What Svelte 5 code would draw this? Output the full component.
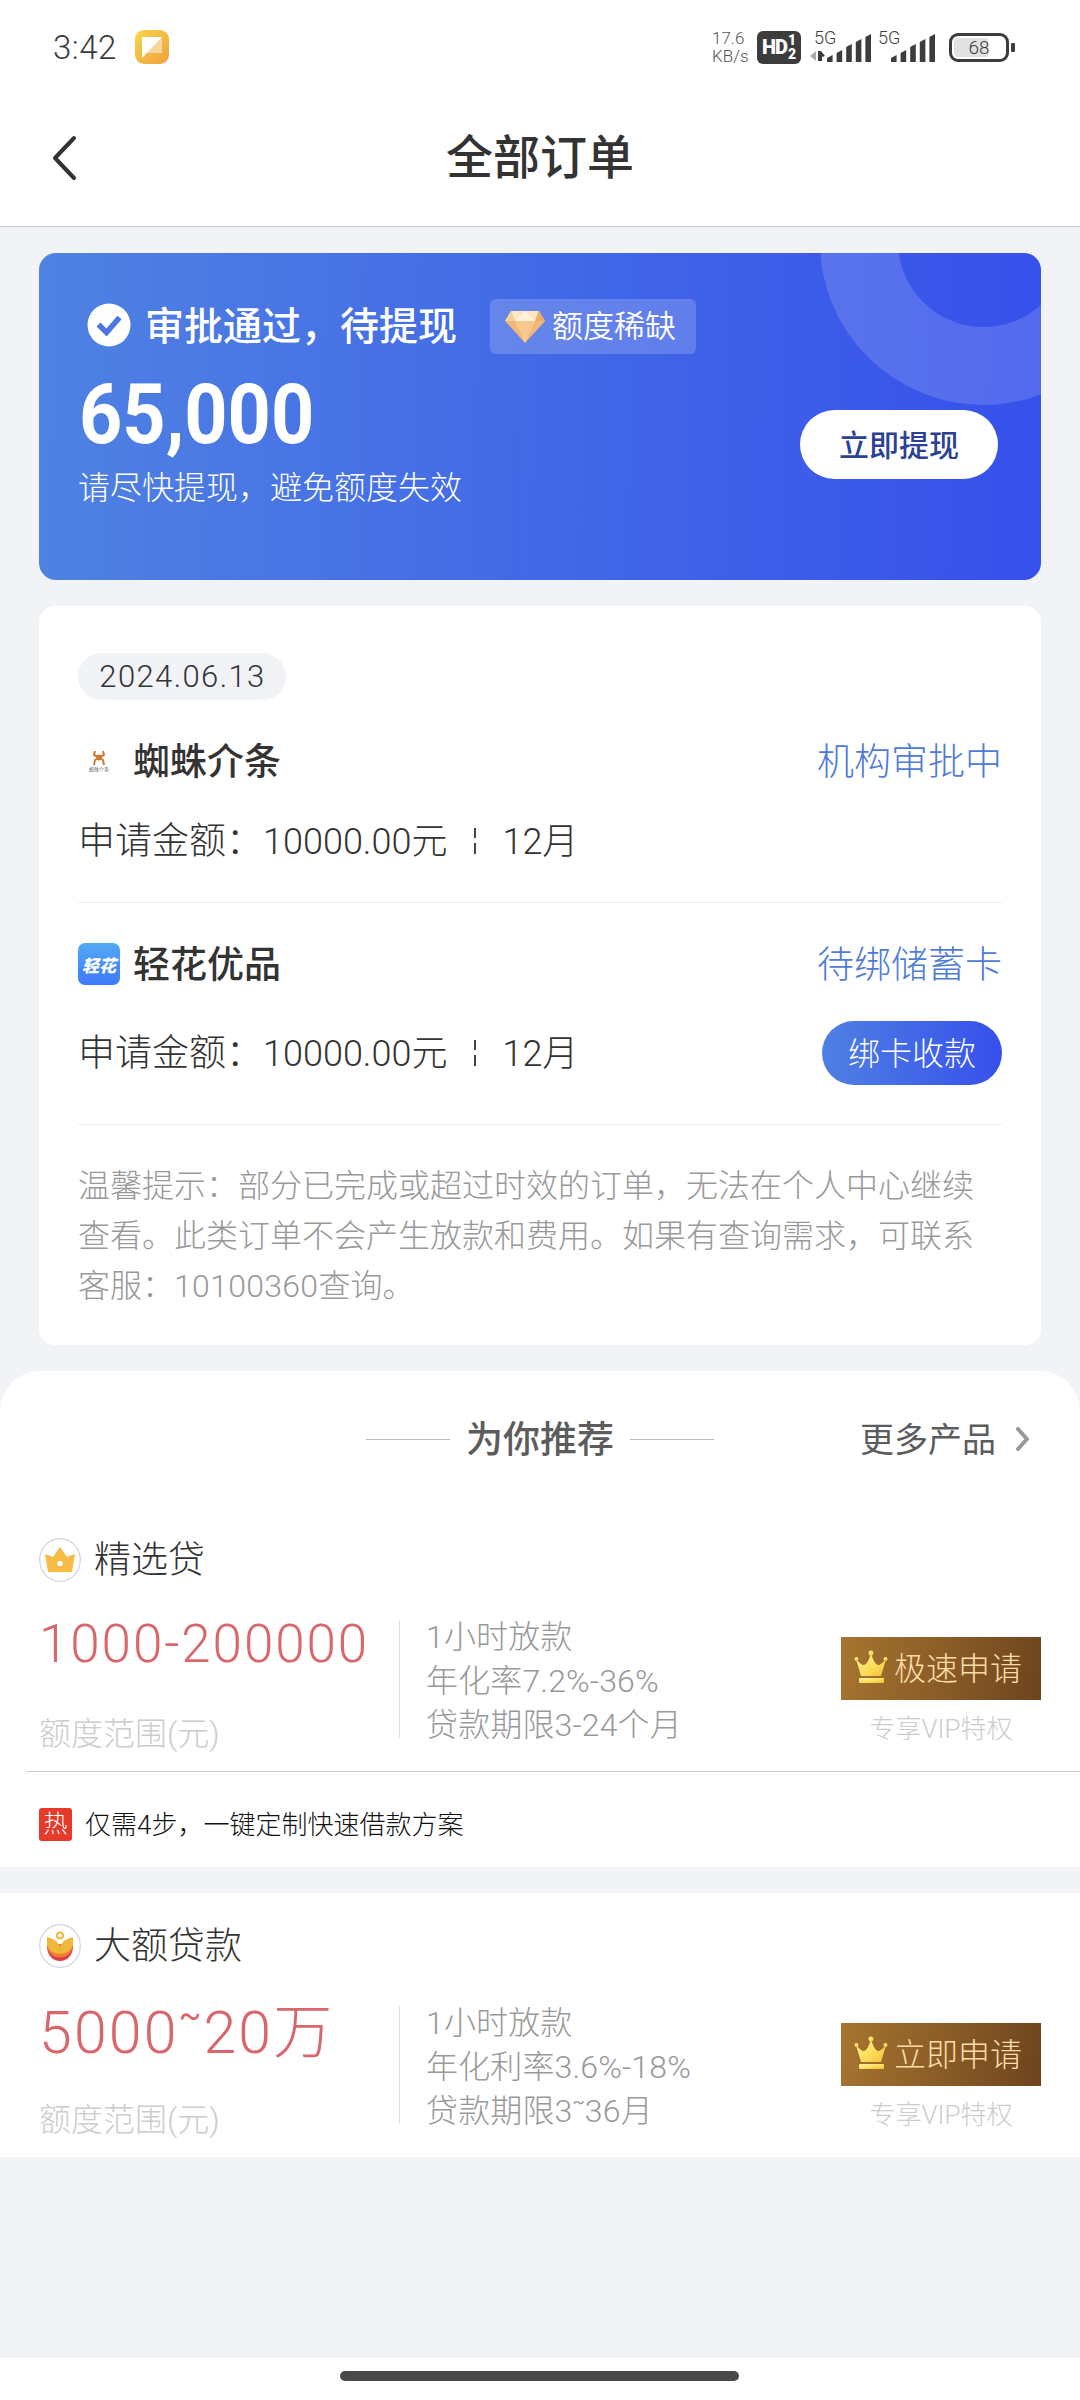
<script>
  const orders = [
    {
      name: '蜘蛛介条',
      logo: 'spider',
      status: '机构审批中',
      amount: '10000.00元',
      term: '12月',
      action: ''
    },
    {
      name: '轻花优品',
      logo: 'flower',
      status: '待绑储蓄卡',
      amount: '10000.00元',
      term: '12月',
      action: '绑卡收款'
    }
  ];

  const products = [
    {
      name: '精选贷',
      icon: 'crown',
      range: '1000-200000',
      wide: false,
      details: ['1小时放款', '年化率7.2%-36%', '贷款期限3-24个月'],
      button: '极速申请',
      hot: '仅需4步，一键定制快速借款方案'
    },
    {
      name: '大额贷款',
      icon: 'lotus',
      range: '5000~20万',
      wide: true,
      details: ['1小时放款', '年化利率3.6%-18%', '贷款期限3~36月'],
      button: '立即申请',
      hot: ''
    }
  ];

  const bars = [7, 12, 18, 23, 28];
</script>

<!-- the tilde in a range is small and raised -->
{#snippet ranged(text)}
  {#each text.split('~') as part, i}{#if i}<sup>~</sup>{/if}{part}{/each}
{/snippet}

<div class="page">
  <div class="statusbar">
    <span class="clock">3:42</span>
    <svg class="app-icon" width="34" height="34" viewBox="0 0 34 34">
      <defs>
        <linearGradient id="appbg" x1="0" y1="0" x2="1" y2="1">
          <stop offset="0" stop-color="#f6d64a" />
          <stop offset="1" stop-color="#f0a03e" />
        </linearGradient>
      </defs>
      <rect width="34" height="34" rx="9" fill="url(#appbg)" />
      <path d="M7 7h20v16H12L7 28z" fill="#f8d79a" />
      <path d="M7 7h20L7 28z" fill="#fff" />
    </svg>
    <div class="speed">
      <span>17.6</span>
      <span>KB/s</span>
    </div>
    <div class="hd">
      <b>HD</b>
      <span><i>1</i><i>2</i></span>
    </div>
    <div class="signal first">
      <span class="net">5G</span>
      <svg width="61" height="30" viewBox="0 0 61 30">
        <path d="M6 19v10L0 24z" fill="#aaa" />
        <path d="M8 19h3l4 5-3 1v4H8z" fill="#3c3c3c" />
        {#each bars as h, i}
          <path d="M{17 + i * 9.6} {30 - h + 3}l5.6 -3V30h-5.6z" fill="#3c3c3c" />
        {/each}
      </svg>
    </div>
    <div class="signal">
      <span class="net">5G</span>
      <svg width="61" height="30" viewBox="0 0 61 30">
        {#each bars as h, i}
          <path d="M{17 + i * 9.6} {30 - h + 3}l5.6 -3V30h-5.6z" fill="#3c3c3c" />
        {/each}
      </svg>
    </div>
    <div class="battery"><span>68</span></div>
    <div class="battery-tip"></div>
  </div>

  <header>
    <svg class="back" width="26" height="46" viewBox="0 0 26 46">
      <path d="M22 3L3 23L22 43" fill="none" stroke="#333" stroke-width="4" stroke-linecap="round" stroke-linejoin="round" />
    </svg>
    <h1>全部订单</h1>
  </header>

  <section class="banner">
    <div class="ring"></div>
    <div class="banner-main">
      <div class="banner-title">
        <svg class="check" width="44" height="44" viewBox="0 0 44 44">
          <circle cx="22" cy="22" r="21.5" fill="#fff" />
          <path d="M11.500 21.500l8 8L32.500 14.500" fill="none" stroke="#4a75e2" stroke-width="5.500" />
        </svg>
        <strong>审批通过，待提现</strong>
        <div class="scarce">
          <svg width="42" height="34" viewBox="0 0 42 34">
            <path d="M7 1h28l6 10L21 33L1 11z" fill="#f3b878" />
            <path d="M7 1h28l-4 10H11z" fill="#fde6c3" />
            <path d="M7 1L1 11h10z" fill="#f8cf9c" />
            <path d="M35 1l6 10H31z" fill="#efaa66" />
            <path d="M11 11h20L21 33z" fill="#f8c98e" />
            <path d="M11 11L21 1L31 11z" fill="#fff1da" />
          </svg>
          <span>额度稀缺</span>
        </div>
      </div>
      <div class="amount">65,000</div>
      <p>请尽快提现，避免额度失效</p>
    </div>
    <button class="withdraw">立即提现</button>
  </section>

  <section class="card">
    <span class="date">2024.06.13</span>
    {#each orders as order}
      <div class="order" class:has-action={order.action}>
        <div class="order-head">
          {#if order.logo === 'spider'}
            <div class="logo spider">
              <svg width="14" height="16" viewBox="0 0 14 16">
                <path d="M3 1L2 5l4 2M11 1l1 4l-4 2M2 15l1-5l3-2M12 15l-1-5l-3-2" fill="none" stroke="#cf7a35" stroke-width="2" />
                <circle cx="7" cy="7.500" r="3" fill="#cf7a35" />
              </svg>
              <span>蜘蛛介条</span>
            </div>
          {:else}
            <div class="logo flower"><span>轻花</span></div>
          {/if}
          <strong>{order.name}</strong>
          <span class="status">{order.status}</span>
        </div>
        <div class="order-body">
          <span class="label">申请金额：</span>
          <span class="value">{order.amount}</span>
          <svg class="sep" width="4" height="26" viewBox="0 0 4 26">
            <path d="M2 0v10M2 15v11" stroke="#444" stroke-width="2" />
          </svg>
          <span class="value">{order.term}</span>
          {#if order.action}
            <button class="bind">{order.action}</button>
          {/if}
        </div>
      </div>
    {/each}
    <p class="tips">
      温馨提示：部分已完成或超过时效的订单，无法在个人中心继续<br />
      查看。此类订单不会产生放款和费用。如果有查询需求，可联系<br />
      客服：<span>10100360</span>查询。
    </p>
  </section>

  <section class="recommend">
    <div class="rec-head">
      <div class="rec-title"><i></i><strong>为你推荐</strong><i></i></div>
      <div class="more">
        <span>更多产品</span>
        <svg width="14" height="24" viewBox="0 0 14 24">
          <path d="M2 2l9 10l-9 10" fill="none" stroke="#999" stroke-width="4" stroke-linejoin="round" stroke-linecap="round" />
        </svg>
      </div>
    </div>

    {#each products as item}
      <article>
        <div class="item-name">
          <svg width="42" height="44" viewBox="0 0 42 44">
            <ellipse cx="21" cy="22" rx="20.300" ry="21.300" fill="#fff" stroke="#d3d3e4" stroke-width="1.200" />
            {#if item.icon === 'crown'}
              <path d="M6 16l8 3l7-10l7 10l8-3l-3 18H9z" fill="#f7bb45" />
              <rect x="18.500" y="23" width="5" height="5" rx="1" fill="#fff" />
            {:else}
              <path d="M8 22c0 20 26 20 26 0z" fill="#dd3a44" />
              <path d="M8 20c0 18 26 18 26 0z" fill="#ee7e35" />
              <path d="M8 13q10 2 13 10q3-8 13-10v7c-2 13-24 13-26 0z" fill="#f0b83a" />
              <circle cx="21" cy="11.500" r="3" fill="none" stroke="#edb93b" stroke-width="2" />
            {/if}
          </svg>
          <h2>{item.name}</h2>
        </div>
        <div class="item-row">
          <div class="range" class:wide={item.wide}>
            <b>{@render ranged(item.range)}</b>
            <span>额度范围(元)</span>
          </div>
          <ul>
            {#each item.details as line}
              <li>{@render ranged(line)}</li>
            {/each}
          </ul>
          <div class="apply">
            <button>
              <svg width="34" height="34" viewBox="0 0 34 34">
                <defs>
                  <linearGradient id="gold-{item.icon}" x1="0" y1="0" x2="1" y2="1">
                    <stop offset="0" stop-color="#fff3a0" />
                    <stop offset="0.600" stop-color="#fbdc55" />
                    <stop offset="1" stop-color="#f3bb3c" />
                  </linearGradient>
                </defs>
                <g fill="url(#gold-{item.icon})">
                  <path d="M2 9q5 6 8 6q4-1 7-12q3 11 7 12q3 0 8-6l-5 17H7z" />
                  <rect x="5" y="28" width="25" height="5" rx="1" />
                  <circle cx="17" cy="3" r="2.500" />
                  <circle cx="2.500" cy="9" r="2" />
                  <circle cx="31.500" cy="9" r="2" />
                </g>
              </svg>
              <span>{item.button}</span>
            </button>
            <p>专享VIP特权</p>
          </div>
        </div>
        {#if item.hot}
          <div class="hot"><i>热</i><span>{item.hot}</span></div>
        {/if}
      </article>
    {/each}
  </section>

  <div class="navbar"><div></div></div>
</div>

<style>
  .page {
    display: flex;
    flex-direction: column;
    width: 1080px;
    height: 2400px;
    overflow: hidden;
    background: #f2f3f7;
    color: #333;
    font-family: Roboto, 'Noto Sans CJK SC', sans-serif;
    font-weight: 300;
  }
  .page * {
    box-sizing: border-box;
    white-space: nowrap;
  }
  h1, h2, p, ul {
    margin: 0;
    padding: 0;
    list-style: none;
    font-weight: 300;
  }
  i {
    font-style: normal;
  }
  sup {
    font-size: 0.56em;
    font-weight: 400;
    line-height: 0;
    vertical-align: 0.78em;
  }
  svg {
    display: block;
    flex: none;
  }
  button {
    border: 0;
    font: inherit;
  }

  .statusbar {
    display: flex;
    align-items: center;
    height: 94px;
    padding: 0 65px 0 53px;
    background: #fff;
    color: #3c3c3c;
  }
  .clock {
    width: 82px;
    font-size: 33px;
    letter-spacing: 0.5px;
  }
  .speed {
    display: flex;
    flex-direction: column;
    width: 45px;
    margin-left: auto;
    color: #555;
    font-size: 17px;
    line-height: 18px;
  }
  .hd {
    display: flex;
    align-items: center;
    justify-content: center;
    gap: 1px;
    width: 44px;
    height: 33px;
    border-radius: 6px;
    background: #3c3c3c;
    color: #fff;
  }
  .hd b {
    font-size: 20px;
    font-weight: 900;
    letter-spacing: -1px;
  }
  .hd i {
    display: block;
    font-size: 14px;
    font-weight: 900;
    line-height: 14px;
  }
  .signal {
    position: relative;
    width: 61px;
    height: 30px;
    margin-left: 3px;
  }
  .signal.first {
    margin-left: 9px;
  }
  .net {
    position: absolute;
    top: -5px;
    left: 4px;
    font-size: 18px;
  }
  .battery {
    width: 60px;
    height: 29px;
    margin-left: 14px;
    border: 3px solid #3c3c3c;
    border-radius: 9px;
    background: linear-gradient(90deg, #e2e2e2 66%, #fff 66%);
    background-clip: content-box;
    padding: 2px;
    text-align: center;
    font-size: 19px;
    line-height: 20px;
  }
  .battery-tip {
    width: 4px;
    height: 9px;
    margin-left: 2px;
    border-radius: 1px;
    background: #3c3c3c;
  }

  header {
    position: relative;
    display: flex;
    align-items: center;
    justify-content: center;
    height: 133px;
    padding-bottom: 14px;
    border-bottom: 1px solid #c6c8cb;
    background: #fff;
  }
  .back {
    position: absolute;
    left: 52px;
    top: 41px;
  }
  h1 {
    font-size: 47px;
    font-weight: 500;
  }

  .banner {
    position: relative;
    display: flex;
    justify-content: space-between;
    height: 327px;
    margin: 26px 39px 0;
    padding: 46px 43px 0 40px;
    border-radius: 17px;
    overflow: hidden;
    background: linear-gradient(91deg, #4f82e2, #3650eb);
    color: #fff;
  }
  .ring {
    position: absolute;
    left: 781px;
    top: -175px;
    width: 327px;
    height: 327px;
    border: 78px solid rgba(255, 255, 255, 0.15);
    border-radius: 50%;
  }
  .banner-title {
    display: flex;
    align-items: center;
    height: 55px;
    padding-left: 8px;
  }
  .check {
    margin-bottom: 4px;
  }
  .banner-title strong {
    margin-left: 14px;
    padding-bottom: 8px;
    font-size: 39px;
    font-weight: 500;
  }
  .scarce {
    display: flex;
    align-items: center;
    gap: 6px;
    width: 206px;
    height: 55px;
    margin-left: 33px;
    padding-left: 14px;
    border-radius: 6px;
    background: rgba(255, 255, 255, 0.18);
    font-size: 31px;
    font-weight: 350;
  }
  .scarce span {
    padding-bottom: 6px;
  }
  .amount {
    margin-top: 16px;
    transform: scaleX(0.91);
    transform-origin: left;
    font-size: 83px;
    font-weight: 700;
    line-height: 90px;
  }
  .banner p {
    margin: 6px 0 0 -1px;
    font-size: 32px;
    line-height: 44px;
  }
  .withdraw {
    width: 198px;
    height: 69px;
    margin-top: 111px;
    padding-bottom: 5px;
    border-radius: 35px;
    background: #fff;
    color: #2b4192;
    font-size: 30px;
    font-weight: 500;
  }

  .card {
    height: 739px;
    margin: 26px 39px 0;
    padding: 47px 39px 0;
    border-radius: 16px;
    background: #fff;
  }
  .date {
    display: block;
    width: 208px;
    height: 47px;
    padding-left: 1px;
    border-radius: 24px;
    background: #f2f3f7;
    text-align: center;
    font-size: 31px;
    line-height: 47px;
    letter-spacing: 1.4px;
  }
  .order {
    height: 203px;
    padding-top: 37px;
    border-bottom: 1px solid #efefef;
  }
  .order.has-action {
    height: 222px;
  }
  .order-head {
    display: flex;
    align-items: center;
    height: 48px;
  }
  .order-head strong {
    margin-left: 13px;
    padding-bottom: 5px;
    font-size: 37px;
    font-weight: 500;
  }
  .status {
    margin-left: auto;
    padding-bottom: 5px;
    color: #4e7bd8;
    font-size: 37px;
  }
  .logo {
    display: flex;
    flex-direction: column;
    align-items: center;
    justify-content: center;
    width: 42px;
    height: 42px;
    border-radius: 7px;
  }
  .spider span {
    height: 6px;
    font-size: 5px;
    line-height: 6px;
  }
  .flower {
    background: linear-gradient(#53aaf3, #3d78fb);
    color: #fff;
  }
  .flower span {
    font-size: 17px;
    font-weight: 900;
    font-style: italic;
  }
  .order-body {
    display: flex;
    align-items: center;
    height: 64px;
    margin-top: 24px;
    font-size: 37px;
  }
  .has-action .order-body {
    margin-top: 33px;
  }
  .label,
  .value {
    padding-bottom: 6px;
  }
  .value {
    font-size: 36px;
  }
  .sep {
    margin: 0 25px 0 26px;
  }
  .bind {
    width: 180px;
    height: 64px;
    margin-left: auto;
    padding-bottom: 5px;
    border-radius: 32px;
    background: linear-gradient(90deg, #4f80e3, #3650eb);
    color: #fff;
    font-size: 32px;
  }
  .tips {
    margin-top: 36px;
    color: #999;
    font-size: 32px;
    line-height: 50px;
  }
  .tips span {
    letter-spacing: 0.3px;
  }

  .recommend {
    height: 785px;
    margin-top: 26px;
  }
  .rec-head {
    position: relative;
    display: flex;
    align-items: center;
    justify-content: center;
    height: 136px;
    border-radius: 40px 40px 0 0;
    background: #fff;
    color: #5c5c5c;
  }
  .rec-title {
    display: flex;
    align-items: center;
    gap: 16px;
    font-size: 37px;
  }
  .rec-title strong {
    padding-bottom: 5px;
    font-weight: 500;
  }
  .rec-title i {
    width: 84px;
    height: 1px;
    background: #bbb;
  }
  .more {
    position: absolute;
    right: 50px;
    display: flex;
    align-items: center;
    gap: 20px;
    font-size: 34px;
    font-weight: 400;
  }
  .more span {
    padding-bottom: 4px;
  }

  article {
    padding-top: 24px;
    background: #fff;
  }
  article + article {
    margin-top: 26px;
  }
  .item-name {
    display: flex;
    align-items: center;
    height: 58px;
    padding: 0 39px;
  }
  .item-name h2 {
    margin-left: 13px;
    padding-bottom: 6px;
    font-size: 37px;
  }
  .item-row {
    display: flex;
    height: 182px;
    padding: 31px 39px 0;
  }
  .range {
    display: flex;
    flex-direction: column;
    justify-content: space-between;
    width: 361px;
    height: 118px;
    border-right: 1px solid #ddd;
  }
  .range b {
    padding-top: 1px;
    color: #d9666a;
    font-size: 53px;
    font-weight: 300;
    line-height: 46px;
    letter-spacing: 1.9px;
  }
  .range.wide b {
    padding-top: 4px;
    font-size: 59px;
    letter-spacing: 2.2px;
  }
  .range span {
    margin-bottom: -8px;
    color: #ccc;
    font-size: 32px;
    line-height: 24px;
  }
  ul {
    margin: -5px 0 0 26px;
    color: #999;
    font-size: 32px;
    line-height: 44px;
    letter-spacing: 0.15px;
  }
  .apply {
    margin: 17px 0 0 auto;
    width: 200px;
    text-align: center;
  }
  .apply p {
    margin-top: 14px;
    color: #ccc;
    font-size: 26px;
    line-height: 30px;
  }
  .apply button {
    display: flex;
    align-items: center;
    gap: 6px;
    width: 200px;
    height: 63px;
    padding: 0 0 0 13px;
    background: linear-gradient(100deg, #a77530, #6d441e);
    color: #fbdca6;
    font-size: 32px;
  }
  .apply button svg {
    margin-bottom: 3px;
  }
  .apply button span {
    padding-bottom: 6px;
  }
  .hot {
    display: flex;
    align-items: center;
    gap: 13px;
    height: 96px;
    margin-left: 26px;
    padding: 9px 0 0 13px;
    border-top: 1px solid #ccc;
    color: #111;
    font-size: 26px;
  }
  .hot i {
    width: 33px;
    height: 33px;
    border-radius: 3px;
    background: #e83a2b;
    color: #fff;
    text-align: center;
    font-size: 24px;
    line-height: 32px;
  }
  .hot span {
    padding-bottom: 3px;
  }

  .navbar {
    display: flex;
    justify-content: center;
    height: 42px;
    margin-top: auto;
    padding: 13px 2px 0 0;
    background: #fff;
  }
  .navbar div {
    width: 399px;
    height: 10px;
    border-radius: 5px;
    background: #4a4a4a;
  }
</style>
